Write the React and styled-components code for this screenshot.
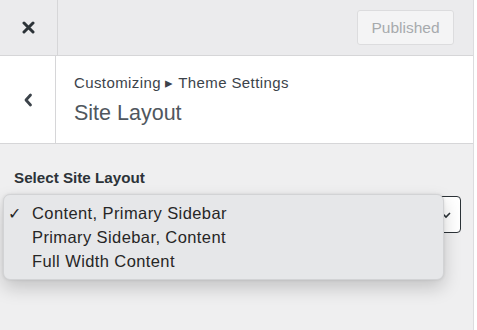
import styled, { createGlobalStyle } from "styled-components";

const GlobalStyle = createGlobalStyle`
  html, body {
    margin: 0;
    padding: 0;
    background: #ffffff;
  }
  body {
    font-family: "Liberation Sans", Arial, sans-serif;
  }
`;

const Page = styled.div`
  width: 477px;
  height: 330px;
  overflow: hidden;
  background: #ffffff;
`;

const Panel = styled.div`
  width: 473px;
  height: 330px;
  border-right: 1px solid #dcdcde;
  background: #efeff0;
  display: flex;
  flex-direction: column;
`;

const Header = styled.div`
  height: 55px;
  display: flex;
  align-items: center;
  background: #ebebed;
  border-bottom: 1px solid #d6d6d8;
`;

const IconCell = styled.div`
  width: ${(p) => p.$w}px;
  height: 100%;
  flex-shrink: 0;
  display: flex;
  align-items: center;
  justify-content: center;
  border-right: 1px solid #d6d6d8;
  color: #3c434a;
`;

const Spacer = styled.div`
  flex: 1;
`;

const PublishButton = styled.button`
  width: 97px;
  height: 35px;
  margin-right: 19px;
  border: 1px solid #dcdcde;
  border-radius: 3px;
  background: #f4f4f5;
  color: #a7aaad;
  font-family: "Liberation Sans", Arial, sans-serif;
  font-size: 15.5px;
  padding: 0;
`;

const TitleRow = styled.div`
  height: 87px;
  display: flex;
  background: #ffffff;
  border-bottom: 1px solid #d6d6d8;
`;

const TitleBlock = styled.div`
  padding: 13px 0 0 18px;
  color: #50575e;
`;

const Crumb = styled.div`
  font-size: 15px;
  letter-spacing: 0.4px;
  line-height: 28px;
  color: #3c434a;
`;

const Heading = styled.div`
  font-size: 21.5px;
  line-height: 32px;
  color: #50575e;
`;

const Section = styled.div`
  padding: 24px 12px 0 14px;
`;

const Label = styled.div`
  font-size: 15.2px;
  font-weight: bold;
  color: #2c3338;
  line-height: 20px;
`;

const SelectWrap = styled.div`
  position: relative;
  margin-top: 8px;
`;

const SelectBox = styled.div`
  height: 37px;
  box-sizing: border-box;
  border: 1px solid #2c3338;
  border-radius: 4px;
  background: #ffffff;
  display: flex;
  align-items: center;
  justify-content: flex-end;
  padding-right: 9px;
`;

const Menu = styled.ul`
  position: absolute;
  left: -11px;
  top: -2px;
  width: 441px;
  height: 86px;
  margin: 0;
  padding: 6px 0 0;
  box-sizing: border-box;
  list-style: none;
  background: #e6e7e9;
  border: 1px solid #d2d3d5;
  border-radius: 7px;
  box-shadow: 0 8px 18px rgba(0, 0, 0, 0.18), 0 0 3px rgba(0, 0, 0, 0.1);
`;

const Item = styled.li`
  display: flex;
  align-items: center;
  height: 24px;
  font-size: 16.5px;
  letter-spacing: 0.4px;
  color: #262626;
`;

const Check = styled.span`
  width: 28px;
  padding-left: 4px;
  box-sizing: border-box;
  font-size: 16px;
`;

const options = [
  "Content, Primary Sidebar",
  "Primary Sidebar, Content",
  "Full Width Content",
];

export default function App() {
  return (
    <Page>
      <GlobalStyle />
      <Panel>
        <Header>
          <IconCell $w={57}>
            <svg width="13" height="13" viewBox="0 0 13 13">
              <path d="M2 2 L11 11 M11 2 L2 11" stroke="#2c3338" strokeWidth="3" strokeLinecap="round" />
            </svg>
          </IconCell>
          <Spacer />
          <PublishButton>Published</PublishButton>
        </Header>
        <TitleRow>
          <IconCell $w={55}>
            <svg width="10" height="14" viewBox="0 0 10 14">
              <path d="M7.5 2 L3 7 L7.5 12" fill="none" stroke="#3c434a" strokeWidth="2.8" strokeLinecap="round" strokeLinejoin="round" />
            </svg>
          </IconCell>
          <TitleBlock>
            <Crumb>Customizing ▸ Theme Settings</Crumb>
            <Heading>Site Layout</Heading>
          </TitleBlock>
        </TitleRow>
        <Section>
          <Label>Select Site Layout</Label>
          <SelectWrap>
            <SelectBox>
              <svg width="10" height="8" viewBox="0 0 10 8">
                <path d="M1 2 L5 6 L9 2" fill="none" stroke="#2c3338" strokeWidth="1.6" />
              </svg>
            </SelectBox>
            <Menu>
              {options.map((o, i) => (
                <Item key={o}>
                  <Check>{i === 0 ? "✓" : ""}</Check>
                  {o}
                </Item>
              ))}
            </Menu>
          </SelectWrap>
        </Section>
      </Panel>
    </Page>
  );
}
